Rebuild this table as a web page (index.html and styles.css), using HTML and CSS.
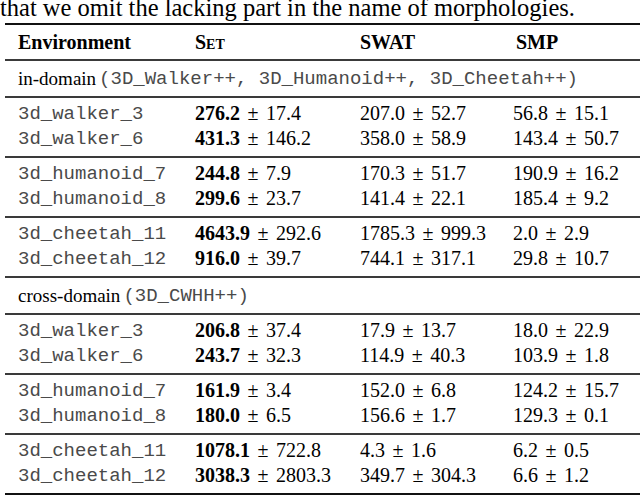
FILE: index.html
```html
<!DOCTYPE html>
<html>
<head>
<meta charset="utf-8">
<link rel="stylesheet" href="styles.css">
</head>
<body>
<p class="caption">that we omit the lacking part in the name of morphologies.</p>
<div class="table">
  <div class="row head">
    <span>Environment</span><span class="sc">Set</span><span>SWAT</span><span class="smp">SMP</span>
  </div>
  <div class="label">in-domain<span class="tt">(3D_Walker++, 3D_Humanoid++, 3D_Cheetah++)</span></div>
  <div class="group">
    <div class="row"><span class="tt">3d_walker_3</span><span><b>276.2</b><span class="pm">±</span>17.4</span><span>207.0<span class="pm">±</span>52.7</span><span>56.8<span class="pm">±</span>15.1</span></div>
    <div class="row"><span class="tt">3d_walker_6</span><span><b>431.3</b><span class="pm">±</span>146.2</span><span>358.0<span class="pm">±</span>58.9</span><span>143.4<span class="pm">±</span>50.7</span></div>
  </div>
  <div class="group">
    <div class="row"><span class="tt">3d_humanoid_7</span><span><b>244.8</b><span class="pm">±</span>7.9</span><span>170.3<span class="pm">±</span>51.7</span><span>190.9<span class="pm">±</span>16.2</span></div>
    <div class="row"><span class="tt">3d_humanoid_8</span><span><b>299.6</b><span class="pm">±</span>23.7</span><span>141.4<span class="pm">±</span>22.1</span><span>185.4<span class="pm">±</span>9.2</span></div>
  </div>
  <div class="group">
    <div class="row"><span class="tt">3d_cheetah_11</span><span><b>4643.9</b><span class="pm">±</span>292.6</span><span>1785.3<span class="pm">±</span>999.3</span><span>2.0<span class="pm">±</span>2.9</span></div>
    <div class="row"><span class="tt">3d_cheetah_12</span><span><b>916.0</b><span class="pm">±</span>39.7</span><span>744.1<span class="pm">±</span>317.1</span><span>29.8<span class="pm">±</span>10.7</span></div>
  </div>
  <div class="label">cross-domain<span class="tt">(3D_CWHH++)</span></div>
  <div class="group">
    <div class="row"><span class="tt">3d_walker_3</span><span><b>206.8</b><span class="pm">±</span>37.4</span><span>17.9<span class="pm">±</span>13.7</span><span>18.0<span class="pm">±</span>22.9</span></div>
    <div class="row"><span class="tt">3d_walker_6</span><span><b>243.7</b><span class="pm">±</span>32.3</span><span>114.9<span class="pm">±</span>40.3</span><span>103.9<span class="pm">±</span>1.8</span></div>
  </div>
  <div class="group">
    <div class="row"><span class="tt">3d_humanoid_7</span><span><b>161.9</b><span class="pm">±</span>3.4</span><span>152.0<span class="pm">±</span>6.8</span><span>124.2<span class="pm">±</span>15.7</span></div>
    <div class="row"><span class="tt">3d_humanoid_8</span><span><b>180.0</b><span class="pm">±</span>6.5</span><span>156.6<span class="pm">±</span>1.7</span><span>129.3<span class="pm">±</span>0.1</span></div>
  </div>
  <div class="group last">
    <div class="row"><span class="tt">3d_cheetah_11</span><span><b>1078.1</b><span class="pm">±</span>722.8</span><span>4.3<span class="pm">±</span>1.6</span><span>6.2<span class="pm">±</span>0.5</span></div>
    <div class="row"><span class="tt">3d_cheetah_12</span><span><b>3038.3</b><span class="pm">±</span>2803.3</span><span>349.7<span class="pm">±</span>304.3</span><span>6.6<span class="pm">±</span>1.2</span></div>
  </div>
</div>
</body>
</html>
```

FILE: styles.css
```css
html, body {
  margin: 0;
  padding: 0;
  background: #fff;
}
body {
  width: 640px;
  height: 495px;
  overflow: hidden;
  font-family: "Liberation Serif", "Times New Roman", serif;
  color: #000;
}
.caption {
  margin: 0;
  font-size: 24.5px;
  line-height: 16.5px;
  height: 23px;
  white-space: nowrap;
}
.table {
  margin-left: 5px;
  border-top: 2px solid #111;
  border-bottom: 2px solid #111;
  font-size: 20px;
}
.row {
  display: grid;
  grid-template-columns: 177px 165px 153px 1fr;
  padding-left: 13px;
  height: 25px;
  align-items: center;
  white-space: nowrap;
}
.head {
  height: 34px;
  font-weight: bold;
  border-bottom: 2px solid #3a3a3a;
}
.sc {
  font-variant: small-caps;
}
.smp {
  padding-left: 3px;
}
.label {
  height: 35px;
  display: flex;
  align-items: center;
  padding-left: 13px;
  font-size: 19px;
  border-bottom: 2px solid #3a3a3a;
  white-space: nowrap;
}
.label .tt {
  margin-left: 3px;
}
.group {
  padding: 3px 0 5px;
  border-bottom: 2px solid #3a3a3a;
}
.group.last {
  border-bottom: none;
}
.tt {
  font-family: "Liberation Mono", "Courier New", monospace;
  font-size: 19px;
  color: #4a4a4a;
}
.pm {
  display: inline-block;
  width: 16px;
  margin: 0 5px;
  text-align: center;
}
```
